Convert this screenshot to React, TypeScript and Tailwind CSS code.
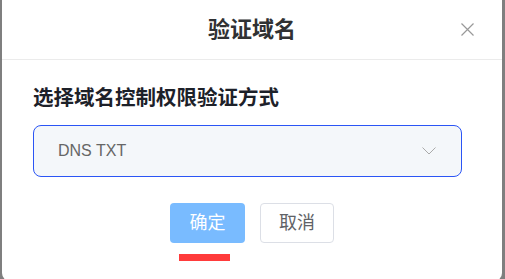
export default function App() {
  return (
    <div className="h-[279px] w-[505px] overflow-hidden bg-[#7f7f7f] pl-[2px] pr-[3px]">
      <div
        className="relative h-[281px] w-[500px] rounded-b-[8px] bg-white"
        style={{ fontFamily: '"Liberation Sans", "Noto Sans CJK SC", sans-serif' }}
      >
        {/* header */}
        <div className="relative flex h-[60px] items-center justify-center border-b border-[#ebebeb]">
          <h2 className="text-[22px] font-bold leading-none text-[#303133]">验证域名</h2>
          <button type="button" className="absolute right-[28px] top-[23px] text-[#999]">
            <svg width="13" height="13" viewBox="0 0 13 13" fill="none">
              <path d="M0.5 0.5L12.5 12.5M12.5 0.5L0.5 12.5" stroke="currentColor" strokeWidth="1.2" />
            </svg>
          </button>
        </div>

        {/* body */}
        <div className="pl-[31px] pt-[24px]">
          <div className="text-[20.5px] font-bold leading-[28px] text-[#1d2129]">选择域名控制权限验证方式</div>
          <div className="mt-[13px] flex h-[52px] w-[429px] items-center justify-between rounded-[8px] border border-[#2b55f5] bg-[#f4f7fa] pl-[24px] pr-[25px]">
            <span className="text-[16px] text-[#666]">DNS TXT</span>
            <svg width="14" height="8" viewBox="0 0 14 8" fill="none" className="text-[#aaa]">
              <path d="M0.5 0.5L7 7L13.5 0.5" stroke="currentColor" strokeWidth="1" />
            </svg>
          </div>
        </div>

        {/* footer */}
        <div className="mt-[26px] flex justify-center gap-[15px]">
          <div className="relative">
            <button
              type="button"
              className="h-[40px] w-[75px] rounded-[4px] bg-[#79bbff] text-[18px] text-white"
            >
              确定
            </button>
            <div className="absolute left-[9px] top-[51px] h-[7px] w-[51px] bg-[#ff3b3b]" />
          </div>
          <button
            type="button"
            className="h-[40px] w-[74px] rounded-[4px] border border-[#dcdfe6] bg-white text-[18px] text-[#606266]"
          >
            取消
          </button>
        </div>
      </div>
    </div>
  );
}
